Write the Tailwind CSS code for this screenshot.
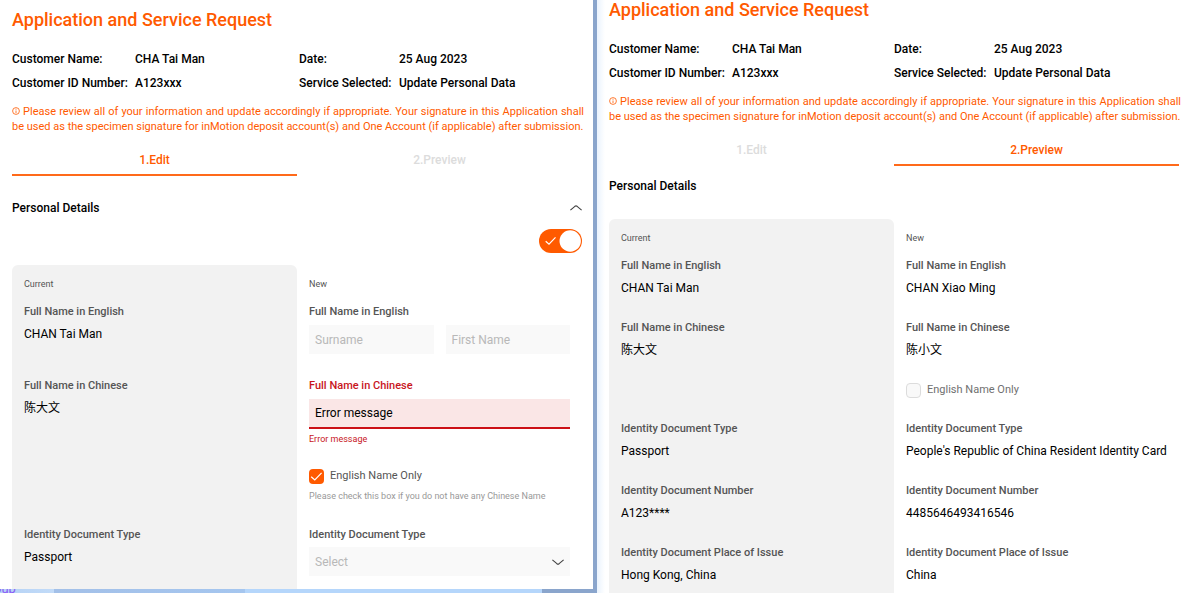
<!DOCTYPE html>
<html lang="en">
<head>
<meta charset="utf-8">
<title>Application and Service Request</title>
<script src="https://cdn.jsdelivr.net/npm/@tailwindcss/browser@4"></script>
</head>
<body class="h-screen overflow-hidden bg-white font-['Roboto','Noto_Sans_CJK_SC',sans-serif] text-xs leading-5 text-black">
<div class="grid h-full grid-cols-[minmax(0,597fr)_minmax(0,591fr)] grid-rows-[minmax(0,1fr)]">

  <!-- Edit step -->
  <div class="relative flex h-full flex-col bg-[linear-gradient(to_right,#b5d2f5_0,#c2dbf8_54px,#a3c0e8_54px,#a5c6ef_245px,#b5d6fb_245px,#b5d6fb_542px,#8aa5cc_542px)] pr-1 pb-1">
    <span class="absolute -bottom-1.5 -left-1.5 text-[13px] leading-5 text-[#8b5cf6]" aria-hidden="true">oup</span>
    <main class="relative min-h-0 flex-1 overflow-hidden bg-white pt-2 pr-[11px] pl-3">
      <h1 class="text-lg leading-6 font-medium text-[#ff5a00]">Application and Service Request</h1>
      <dl class="mt-[15px] grid grid-cols-[123px_164px_100px_1fr] leading-6 font-medium whitespace-nowrap">
        <dt>Customer Name:</dt><dd>CHA Tai Man</dd><dt>Date:</dt><dd>25 Aug 2023</dd>
        <dt>Customer ID Number:</dt><dd>A123xxx</dd><dt>Service Selected:</dt><dd>Update Personal Data</dd>
      </dl>
      <p class="mt-[9px] -mr-0.5 text-justify text-[11px] leading-[15px] text-[#ff5a00]"><svg class="inline size-2 align-baseline" viewBox="0 0 8 8" fill="none" stroke="currentColor" stroke-width=".8"><circle cx="4" cy="4" r="3.4"/><path d="M4 3.5v2.5M4 1.8v.9"/></svg> Please review all of your information and update accordingly if appropriate. Your signature in this Application shall be used as the specimen signature for inMotion deposit account(s) and One Account (if applicable) after submission.</p>
      <nav class="grid grid-cols-2 text-center font-medium">
        <a href="#edit" class="border-b-2 border-[#ff6a1a] pt-4 pb-1 text-[#ff5a00]" aria-current="step">1.Edit</a>
        <a href="#preview" class="border-b-2 border-transparent pt-4 pb-1 text-[#dcdcdc]">2.Preview</a>
      </nav>
      <div class="mt-[22px] flex items-center justify-between">
        <h2 class="font-medium">Personal Details</h2>
        <button type="button" aria-label="Collapse Personal Details" class="text-[#404040]"><svg class="h-2 w-3" viewBox="0 0 12 8" fill="none" stroke="currentColor" stroke-width="1.1"><path d="M.4 6.2 4.9 2.3Q6 1.4 7.1 2.3L11.6 6.2"/></svg></button>
      </div>
      <div class="mt-[11px] flex justify-end">
        <label class="relative h-6 w-[43px]">
          <input type="checkbox" checked aria-label="Update personal details" class="block h-6 w-[43px] appearance-none rounded-full bg-[#ff5a00]">
          <svg class="pointer-events-none absolute inset-0 h-6 w-[43px]" viewBox="0 0 43 24" fill="none"><path d="M6.7 12.3 10 15.2 16.5 8.4" stroke="#fff" stroke-width="1.2"/><circle cx="31.2" cy="12" r="10.7" fill="#fff"/></svg>
        </label>
      </div>

      <section class="mt-3 grid grid-cols-2 text-[#555]">
        <div class="rounded-t-md bg-[#f2f2f2] px-3 pt-3 text-[9px] leading-[15px]">Current</div>
        <div class="px-3 pt-3 text-[9px] leading-[15px]">New</div>

        <div class="bg-[#f2f2f2] px-3 pt-3">
          <h3 class="text-[11px] leading-4 font-medium">Full Name in English</h3>
          <p class="mt-1 text-black">CHAN Tai Man</p>
        </div>
        <fieldset class="px-3 pt-3">
          <legend class="float-left w-full text-[11px] leading-4 font-medium">Full Name in English</legend>
          <div class="clear-both grid grid-cols-2 gap-3 pt-[5px]">
            <input type="text" aria-label="Surname" placeholder="Surname" class="h-[29px] min-w-0 bg-[#f9f9f9] px-1.5 placeholder:text-[#b8b8b8]">
            <input type="text" aria-label="First Name" placeholder="First Name" class="h-[29px] min-w-0 bg-[#f9f9f9] px-1.5 placeholder:text-[#b8b8b8]">
          </div>
        </fieldset>

        <div class="bg-[#f2f2f2] px-3 pt-6">
          <h3 class="text-[11px] leading-4 font-medium">Full Name in Chinese</h3>
          <p class="mt-1 text-black">陈大文</p>
        </div>
        <div class="px-3 pt-6">
          <label for="cn" class="block text-[11px] leading-4 font-medium text-[#c8161d]">Full Name in Chinese</label>
          <input id="cn" type="text" value="Error message" aria-describedby="cn-error" class="mt-[5px] block h-[30px] w-full border-b-2 border-[#cc1016] bg-[#fae6e6] px-1.5 text-black">
          <p id="cn-error" class="mt-[3px] text-[9px] leading-[14px] text-[#c8161d]">Error message</p>
          <div class="mt-[22px] flex items-center gap-1.5 text-[11px] leading-4">
            <span class="relative size-[15px]">
              <input id="only" type="checkbox" checked class="block size-[15px] appearance-none rounded-sm bg-[#ff5a00]">
              <svg class="pointer-events-none absolute inset-0 size-[15px]" viewBox="0 0 15 15" fill="none" stroke="#fff" stroke-width="1.2"><path d="M2.2 7.7 5.8 11 12.6 3.8"/></svg>
            </span>
            <label for="only">English Name Only</label>
          </div>
          <p class="mt-[5px] text-[9px] leading-[14px] text-[#999]">Please check this box if you do not have any Chinese Name</p>
        </div>

        <div class="bg-[#f2f2f2] px-3 pt-6 pb-14">
          <h3 class="text-[11px] leading-4 font-medium">Identity Document Type</h3>
          <p class="mt-1 text-black">Passport</p>
        </div>
        <div class="px-3 pt-6">
          <label for="doc" class="block text-[11px] leading-4 font-medium">Identity Document Type</label>
          <div class="relative mt-1">
            <select id="doc" class="block h-[29px] w-full appearance-none bg-[#f9f9f9] px-1.5 text-[#b8b8b8]"><option>Select</option></select>
            <svg class="pointer-events-none absolute top-[11px] right-1.5 h-2 w-3 text-[#404040]" viewBox="0 0 12 8" fill="none" stroke="currentColor" stroke-width="1.1"><path d="M.4 1.8 4.9 5.7Q6 6.6 7.1 5.7L11.6 1.8"/></svg>
          </div>
        </div>
      </section>
    </main>
  </div>

  <!-- Preview step -->
  <div class="h-full overflow-hidden bg-[linear-gradient(to_right,#eaf3fd,#fff_8px)] pr-[9px] pl-3">
    <h1 class="-mt-0.5 text-lg leading-6 font-medium text-[#ff5a00]">Application and Service Request</h1>
    <dl class="mt-[15px] grid grid-cols-[123px_162px_100px_1fr] leading-6 font-medium whitespace-nowrap">
      <dt>Customer Name:</dt><dd>CHA Tai Man</dd><dt>Date:</dt><dd>25 Aug 2023</dd>
      <dt>Customer ID Number:</dt><dd>A123xxx</dd><dt>Service Selected:</dt><dd>Update Personal Data</dd>
    </dl>
    <p class="mt-[9px] -mr-0.5 text-justify text-[11px] leading-[15px] text-[#ff5a00]"><svg class="inline size-2 align-baseline" viewBox="0 0 8 8" fill="none" stroke="currentColor" stroke-width=".8"><circle cx="4" cy="4" r="3.4"/><path d="M4 3.5v2.5M4 1.8v.9"/></svg> Please review all of your information and update accordingly if appropriate. Your signature in this Application shall be used as the specimen signature for inMotion deposit account(s) and One Account (if applicable) after submission.</p>
    <nav class="grid grid-cols-2 text-center font-medium">
      <a href="#edit" class="border-b-2 border-transparent pt-4 pb-1 text-[#dcdcdc]">1.Edit</a>
      <a href="#preview" class="border-b-2 border-[#ff6a1a] pt-4 pb-1 text-[#ff5a00]" aria-current="step">2.Preview</a>
    </nav>
    <h2 class="mt-2.5 font-medium">Personal Details</h2>

    <section class="mt-[23px] grid grid-cols-2 text-[#555]">
      <div class="rounded-t-md bg-[#f2f2f2] px-3 pt-3 text-[9px] leading-[15px]">Current</div>
      <div class="px-3 pt-3 text-[9px] leading-[15px]">New</div>

      <div class="bg-[#f2f2f2] px-3 pt-3">
        <h3 class="text-[11px] leading-4 font-medium">Full Name in English</h3>
        <p class="mt-1 text-black">CHAN Tai Man</p>
      </div>
      <div class="px-3 pt-3">
        <h3 class="text-[11px] leading-4 font-medium">Full Name in English</h3>
        <p class="mt-1 text-black">CHAN Xiao Ming</p>
      </div>

      <div class="bg-[#f2f2f2] px-3 pt-[22px]">
        <h3 class="text-[11px] leading-4 font-medium">Full Name in Chinese</h3>
        <p class="mt-1 text-black">陈大文</p>
      </div>
      <div class="px-3 pt-[22px]">
        <h3 class="text-[11px] leading-4 font-medium">Full Name in Chinese</h3>
        <p class="mt-1 text-black">陈小文</p>
        <div class="mt-[22px] flex items-center gap-1.5 text-[11px] leading-4">
          <input id="only2" type="checkbox" disabled class="block size-[15px] appearance-none rounded-sm border border-[#dcdcdc] bg-[#f9f9f9]">
          <label for="only2" class="text-[#707070]">English Name Only</label>
        </div>
      </div>

      <div class="bg-[#f2f2f2] px-3 pt-[23px]">
        <h3 class="text-[11px] leading-4 font-medium">Identity Document Type</h3>
        <p class="mt-1 text-black">Passport</p>
      </div>
      <div class="pt-[23px] pl-3 whitespace-nowrap">
        <h3 class="text-[11px] leading-4 font-medium">Identity Document Type</h3>
        <p class="mt-1 text-black">People's Republic of China Resident Identity Card</p>
      </div>

      <div class="bg-[#f2f2f2] px-3 pt-[22px]">
        <h3 class="text-[11px] leading-4 font-medium">Identity Document Number</h3>
        <p class="mt-1 text-black">A123****</p>
      </div>
      <div class="px-3 pt-[22px]">
        <h3 class="text-[11px] leading-4 font-medium">Identity Document Number</h3>
        <p class="mt-1 text-black">4485646493416546</p>
      </div>

      <div class="bg-[#f2f2f2] px-3 pt-[22px] pb-6">
        <h3 class="text-[11px] leading-4 font-medium">Identity Document Place of Issue</h3>
        <p class="mt-1 text-black">Hong Kong, China</p>
      </div>
      <div class="px-3 pt-[22px] pb-6">
        <h3 class="text-[11px] leading-4 font-medium">Identity Document Place of Issue</h3>
        <p class="mt-1 text-black">China</p>
      </div>
    </section>
  </div>
</div>
</body>
</html>
